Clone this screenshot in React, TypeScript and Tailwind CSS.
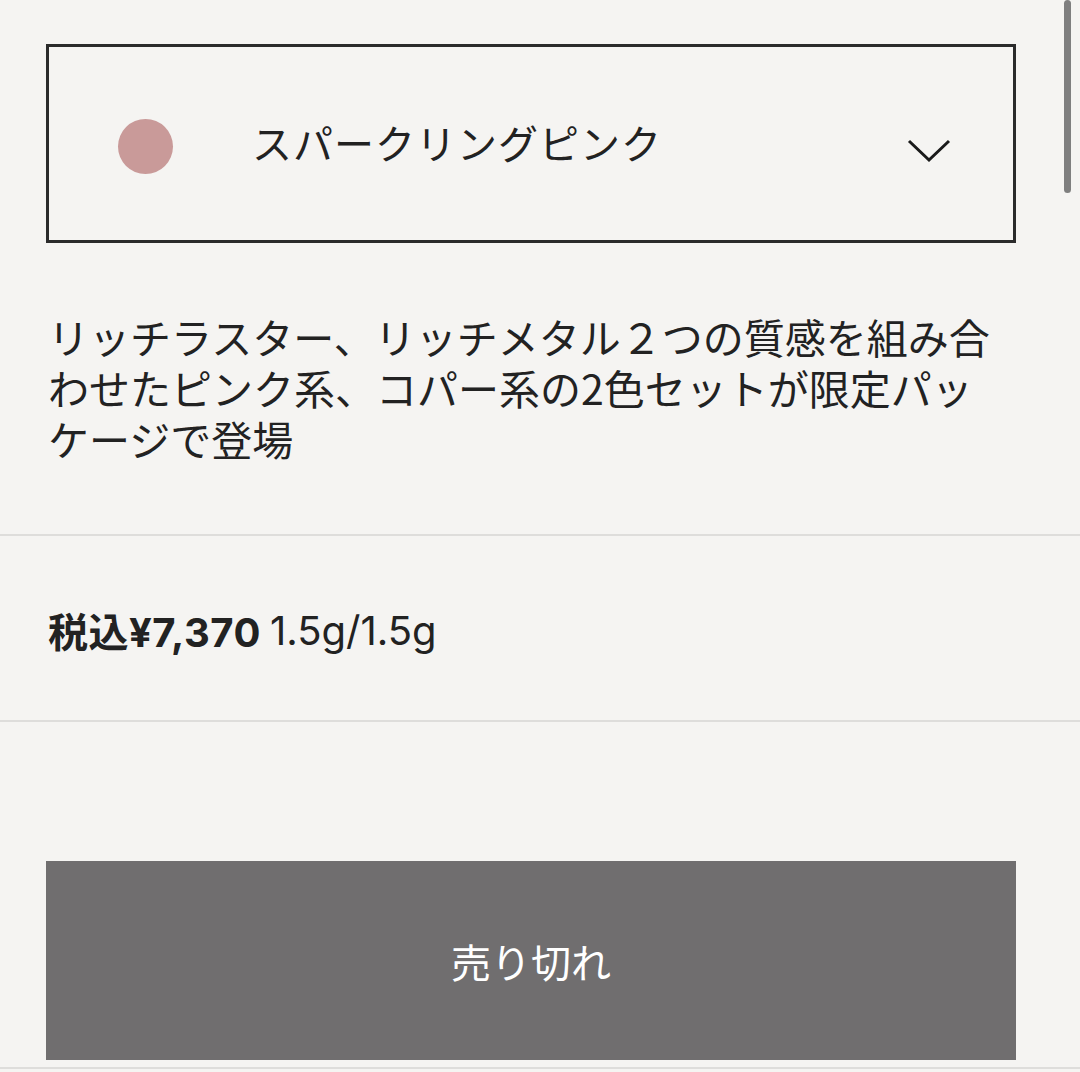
import { useState } from 'react'

const FONT = "font-['Noto_Sans_CJK_JP','Noto_Sans',sans-serif]"

export default function App() {
  const [open, setOpen] = useState(false)

  return (
    <div className={`relative h-[1072px] w-full overflow-hidden bg-[#f5f4f2] text-[#222] ${FONT}`}>
      {/* scroll indicator */}
      <div className="absolute right-[9px] top-0 h-[193px] w-[7px] rounded-full bg-[#7f7f7f]" />

      <div className="pt-[44px]">
        {/* Colour select */}
        <button
          type="button"
          onClick={() => setOpen(!open)}
          className="ml-[46px] flex h-[199px] w-[970px] items-center border-[3px] border-[#2b2b2b] pl-[69px] pr-[62px] text-left"
        >
          <span className="mt-[6px] h-[55px] w-[55px] flex-shrink-0 rounded-full bg-[#c99a99]" />
          <span className="ml-[79px] flex-1 text-[40px] leading-none tracking-[1px] -mt-[4px]">スパークリングピンク</span>
          <svg width="44" height="24" viewBox="0 0 44 24" fill="none" className="mt-[14px]">
            <path d="M2 2l20 19L42 2" stroke="#1a1a1a" strokeWidth="3" />
          </svg>
        </button>

        {/* Description */}
        <p className="ml-[48px] mr-[64px] mt-[68px] text-[41px] leading-[51px]">
          リッチラスター、リッチメタル２つの質感を組み合<br />
          わせたピンク系、コパー系の2色セットが限定パッ<br />
          ケージで登場
        </p>

        {/* Price */}
        <div className="mt-[70px] border-y-2 border-[#dedddb]">
          <div className="flex h-[184px] items-center pl-[48px] pt-[6px]">
            <span className="text-[40px] font-bold tracking-[0.5px]">税込<span className="font-['Inter',sans-serif]">¥7,370</span></span>
            <span className="ml-[9px] font-['Inter',sans-serif] text-[40px] font-normal">1.5g/1.5g</span>
          </div>
        </div>

        {/* Sold out */}
        <div className="ml-[46px] mt-[139px] flex h-[199px] w-[970px] items-center justify-center bg-[#706e6f] text-[40px] text-white">
          売り切れ
        </div>
        <div className="mt-[7px] h-[2px] w-full bg-[#dedddb]" />
      </div>
    </div>
  )
}
